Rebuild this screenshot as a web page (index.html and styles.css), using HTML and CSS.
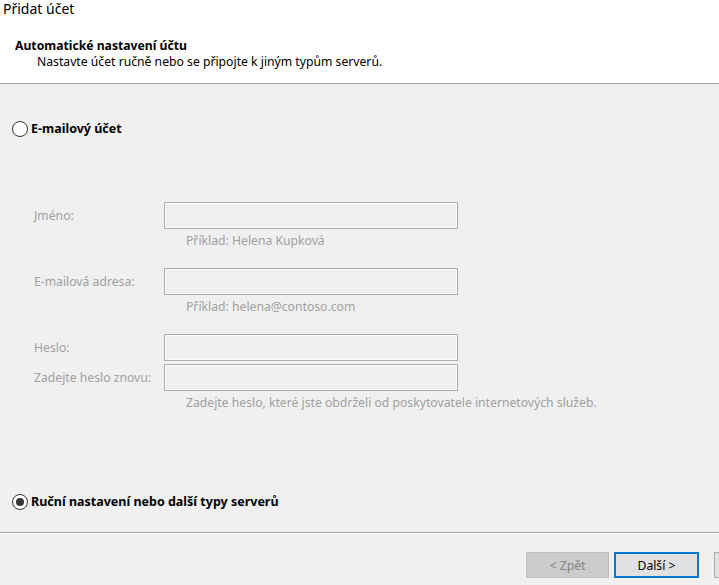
FILE: index.html
```html
<!DOCTYPE html>
<html lang="cs">
<head>
<meta charset="utf-8">
<title>Přidat účet</title>
<link rel="stylesheet" href="styles.css">
</head>
<body>
<div class="page">
  <header class="header">
    <div class="title">Přidat účet</div>
    <div class="heading">Automatické nastavení účtu</div>
    <div class="sub">Nastavte účet ručně nebo se připojte k jiným typům serverů.</div>
  </header>
  <main class="content">
    <label class="radio-row first">
      <span class="radio"></span>
      <span class="radio-label">E-mailový účet</span>
    </label>
    <div class="form">
      <div class="field">
        <span class="label">Jméno:</span>
        <span class="input"></span>
      </div>
      <div class="hint">Příklad: Helena Kupková</div>
      <div class="field gap">
        <span class="label">E-mailová adresa:</span>
        <span class="input"></span>
      </div>
      <div class="hint">Příklad: helena@contoso.com</div>
      <div class="field gap">
        <span class="label">Heslo:</span>
        <span class="input"></span>
      </div>
      <div class="field tight">
        <span class="label">Zadejte heslo znovu:</span>
        <span class="input"></span>
      </div>
      <div class="hint">Zadejte heslo, které jste obdrželi od poskytovatele internetových služeb.</div>
    </div>
    <label class="radio-row second">
      <span class="radio checked"></span>
      <span class="radio-label">Ruční nastavení nebo další typy serverů</span>
    </label>
  </main>
  <footer class="footer">
    <span class="btn disabled">&lt; Zpět</span>
    <span class="btn primary">Další &gt;</span>
    <span class="btn partial"></span>
  </footer>
</div>
</body>
</html>
```
FILE: styles.css
```css
html, body {
  margin: 0;
  padding: 0;
  background: #f0f0f0;
  overflow: hidden;
}
.page {
  width: 719px;
  height: 585px;
  display: flex;
  flex-direction: column;
  font-family: "Noto Sans", "Open Sans", sans-serif;
  font-size: 12.2px;
  color: #000;
  overflow: hidden;
}
.header {
  background: #fff;
  height: 84px;
  box-sizing: border-box;
  border-bottom: 1px solid #a0a0a0;
  padding: 1px 0 0 3px;
}
.title {
  font-size: 14px;
  line-height: 16px;
  color: #000;
}
.heading {
  font-weight: bold;
  margin: 21px 0 0 12px;
  line-height: 16px;
}
.sub {
  margin: 0 0 0 34px;
  line-height: 15px;
}
.content {
  flex: 1;
  display: flex;
  flex-direction: column;
  border-bottom: 1px solid #a0a0a0;
  box-shadow: 0 1px 0 #fff;
}
.radio-row {
  display: flex;
  align-items: center;
  padding-left: 12px;
  gap: 3px;
}
.radio-row.first { margin-top: 37px; }
.radio-row.second { margin-top: 83px; }
.radio {
  width: 14px;
  height: 14px;
  border: 1px solid #333;
  border-radius: 50%;
  background: #fff;
  box-sizing: content-box;
  position: relative;
}
.radio.checked::after {
  content: "";
  position: absolute;
  left: 3px;
  top: 3px;
  width: 8px;
  height: 8px;
  border-radius: 50%;
  background: #333;
}
.radio-label {
  font-weight: bold;
  font-size: 12.5px;
  line-height: 16px;
}
.form {
  margin-top: 65px;
  padding-left: 34px;
  color: #a0a0a0;
  display: flex;
  flex-direction: column;
}
.field {
  display: flex;
  align-items: center;
  height: 27px;
}
.field.gap { margin-top: 19px; }
.field.tight { margin-top: 3px; }
.label {
  width: 130px;
  line-height: 16px;
}
.input {
  width: 292px;
  height: 25px;
  border: 1px solid #adadad;
  box-shadow: inset 0 0 0 1px #fafafa;
  background: #f0f0f0;
}
.hint {
  margin: 4px 0 0 152px;
  line-height: 16px;
}
.footer {
  height: 52px;
  display: flex;
  align-items: flex-start;
  padding: 19px 0 0 526px;
  box-sizing: border-box;
  gap: 5px;
}
.btn {
  width: 83px;
  height: 26px;
  box-sizing: border-box;
  display: flex;
  align-items: center;
  justify-content: center;
  border: 1px solid #adadad;
  background: #e1e1e1;
  flex-shrink: 0;
}
.btn.disabled {
  background: #cccccc;
  border-color: #bfbfbf;
  color: #838383;
}
.btn.primary {
  width: 85px;
  border: 2px solid #0078d7;
  background: #e1e1e1;
}
.btn.partial {
  margin-left: 10px;
}
```
